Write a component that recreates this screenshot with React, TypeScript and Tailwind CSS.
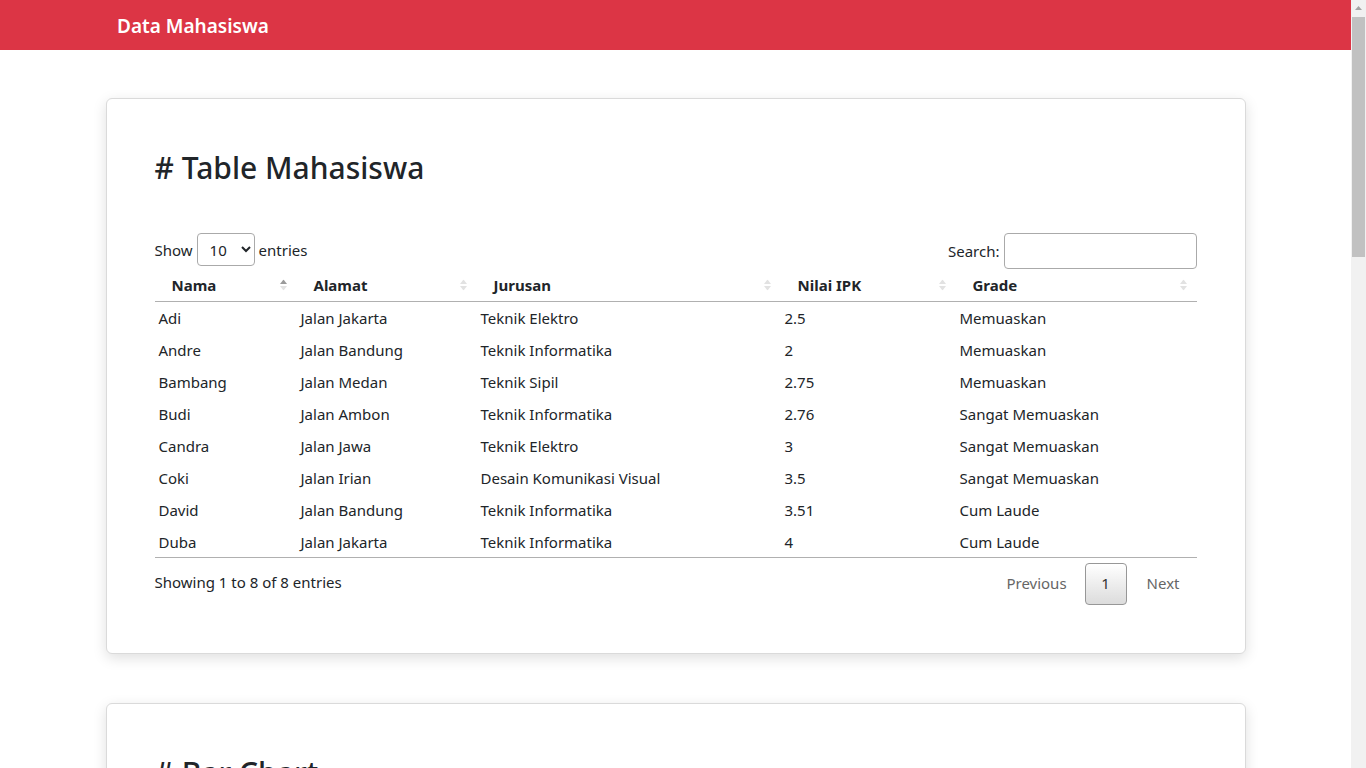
const rows = [
  ["Adi", "Jalan Jakarta", "Teknik Elektro", "2.5", "Memuaskan"],
  ["Andre", "Jalan Bandung", "Teknik Informatika", "2", "Memuaskan"],
  ["Bambang", "Jalan Medan", "Teknik Sipil", "2.75", "Memuaskan"],
  ["Budi", "Jalan Ambon", "Teknik Informatika", "2.76", "Sangat Memuaskan"],
  ["Candra", "Jalan Jawa", "Teknik Elektro", "3", "Sangat Memuaskan"],
  ["Coki", "Jalan Irian", "Desain Komunikasi Visual", "3.5", "Sangat Memuaskan"],
  ["David", "Jalan Bandung", "Teknik Informatika", "3.51", "Cum Laude"],
  ["Duba", "Jalan Jakarta", "Teknik Informatika", "4", "Cum Laude"],
];

const headers = [
  { label: "Nama", w: "w-[142px]", active: true },
  { label: "Alamat", w: "w-[180px]", active: false },
  { label: "Jurusan", w: "w-[304px]", active: false },
  { label: "Nilai IPK", w: "w-[175px]", active: false },
  { label: "Grade", w: "w-[241px]", active: false },
];

function SortIcon({ active }: { active: boolean }) {
  return (
    <svg width="7" height="11" viewBox="0 0 7 11" className="absolute right-[10px] top-1/2 -translate-y-1/2">
      <polygon points="3.5,0 7,4.5 0,4.5" fill={active ? "#9a9a9a" : "#e2e2e2"} />
      <polygon points="0,6.5 7,6.5 3.5,11" fill="#e2e2e2" />
    </svg>
  );
}

function Card({ title, children }: { title: string; children: React.ReactNode }) {
  return (
    <section className="rounded-md border border-[#dadada] bg-white p-12 shadow-[0_4px_14px_rgba(0,0,0,0.13)]">
      <h2 className="pt-[2px] text-[30px] leading-[38px] font-medium">{title}</h2>
      {children}
    </section>
  );
}

export default function App() {
  return (
    <div className="flex min-h-screen bg-white text-[#212529] font-['Noto_Sans',sans-serif]">
      <div className="flex-1 min-w-0">
        <nav className="h-[50px] bg-[#dc3545] flex items-center pl-[117px] pt-[3px]">
          <span className="text-white text-[19px] font-semibold">Data Mahasiswa</span>
        </nav>

        <main className="w-[1140px] mx-auto pt-12 pb-24 flex flex-col gap-[49px]">
          <Card title="# Table Mahasiswa">
            <div className="mt-[46px] flex items-start justify-between">
              <label className="flex items-center gap-1 text-[15px] h-[33px] pt-[2px]">
                Show
                <select className="-mt-[2px] h-[33px] w-[58px] rounded border border-[#aaa] bg-white px-2 text-[15px]">
                  <option>10</option>
                  <option>25</option>
                  <option>50</option>
                  <option>100</option>
                </select>
                entries
              </label>
              <label className="flex items-center gap-1 text-[15px] h-[36px]">
                Search:
                <input className="h-[36px] w-[193px] rounded border border-[#aaa] bg-white px-2" />
              </label>
            </div>

            <table className="w-full table-fixed border-collapse text-[15px]">
              <thead>
                <tr className="border-b border-[#b0b0b0]">
                  {headers.map((h) => (
                    <th key={h.label} className={`${h.w} relative h-[32px] pl-[17px] text-left font-bold`}>
                      {h.label}
                      <SortIcon active={h.active} />
                    </th>
                  ))}
                </tr>
              </thead>
              <tbody>
                {rows.map((r, i) => (
                  <tr key={r[0]} className={i === rows.length - 1 ? "h-[32px] border-b border-[#b0b0b0]" : "h-[32px]"}>
                    {r.map((c, j) => (
                      <td key={j} className="pl-1 pt-[2px]">{c}</td>
                    ))}
                  </tr>
                ))}
              </tbody>
            </table>

            <div className="mt-[5px] flex items-center justify-between">
              <div className="text-[15px] -mt-[2px]">Showing 1 to 8 of 8 entries</div>
              <div className="flex items-center text-[15px] text-[#666]">
                <span className="px-[14px]">Previous</span>
                <span className="mx-[4px] flex h-[42px] w-[42px] items-center justify-center rounded-sm border border-[#979797] bg-gradient-to-b from-white to-[#dcdcdc] text-[#333]">
                  1
                </span>
                <span className="pl-[16px] pr-[17px]">Next</span>
              </div>
            </div>
          </Card>

          <Card title="# Bar Chart">
            <div className="mt-12 h-[560px] flex items-end gap-6 border-b border-l border-[#ccc] px-6">
              {[40, 55, 65, 66, 70, 82, 83, 95].map((v, i) => (
                <div key={i} className="flex-1 bg-[#dc3545]/70" style={{ height: `${v}%` }} />
              ))}
            </div>
          </Card>

          <Card title="# Pie Chart">
            <div className="mt-12 h-[480px] flex items-center justify-center">
              <svg width="400" height="400" viewBox="0 0 40 40">
                <circle r="10" cx="20" cy="20" fill="none" stroke="#dc3545" strokeWidth="20" strokeDasharray="24 63" />
                <circle r="10" cx="20" cy="20" fill="none" stroke="#0d6efd" strokeWidth="20" strokeDasharray="0 24 24 39" />
                <circle r="10" cx="20" cy="20" fill="none" stroke="#ffc107" strokeWidth="20" strokeDasharray="0 48 39 0" />
              </svg>
            </div>
          </Card>
        </main>
      </div>

      {/* page scrollbar */}
      <div className="sticky top-0 h-screen w-[15px] shrink-0 bg-[#f1f1f1] flex flex-col items-center">
        <svg width="15" height="17" viewBox="0 0 15 17">
          <polygon points="7.5,6 11,10 4,10" fill="#a3a3a3" />
        </svg>
        <div className="w-[13px] h-[240px] bg-[#c1c1c1]" />
      </div>
    </div>
  );
}
